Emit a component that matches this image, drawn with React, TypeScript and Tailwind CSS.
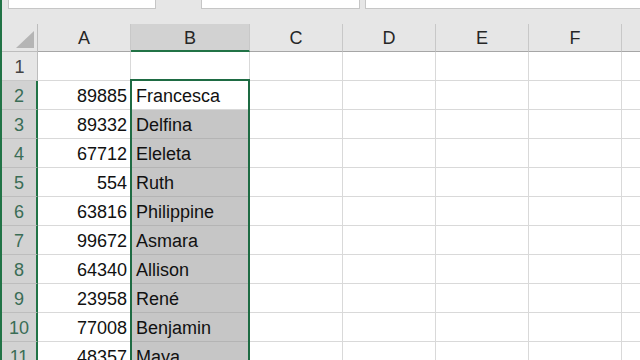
import React from "react";

const cols = [
  { l: "A", w: "w-[93px]" },
  { l: "B", w: "w-[119px]" },
  { l: "C", w: "w-[93px]" },
  { l: "D", w: "w-[93px]" },
  { l: "E", w: "w-[93px]" },
  { l: "F", w: "w-[93px]" },
  { l: "", w: "w-[40px]" },
];

const data: [string, string][] = [
  ["", ""],
  ["89885", "Francesca"],
  ["89332", "Delfina"],
  ["67712", "Eleleta"],
  ["554", "Ruth"],
  ["63816", "Philippine"],
  ["99672", "Asmara"],
  ["64340", "Allison"],
  ["23958", "René"],
  ["77008", "Benjamin"],
  ["48357", "Maya"],
];

export default function App() {
  return (
    <div
      className="relative w-[640px] h-[360px] overflow-hidden bg-white flex"
      style={{ fontFamily: '"Liberation Sans", Arial, sans-serif' }}
    >
      <div className="w-[2px] shrink-0 bg-[#217346]" />
      <div className="flex-1 flex flex-col">
        {/* formula bar remnant */}
        <div className="h-[24px] shrink-0 bg-[#e6e6e6] flex items-start">
          <div className="ml-[6px] w-[148px] h-[9px] bg-white border-x border-b border-[#c6c6c6]" />
          <div className="ml-[45px] w-[159px] h-[9px] bg-white border-x border-b border-[#c6c6c6]" />
          <div className="ml-[5px] flex-1 h-[9px] bg-white border-l border-b border-[#c6c6c6]" />
        </div>
        {/* column headers */}
        <div className="h-[28px] shrink-0 flex bg-[#e6e6e6] text-[18px] text-[#262626]">
          <div className="w-[36px] shrink-0 border-r border-b border-[#bdbdbd] flex items-end justify-end pr-[3px] pb-[3px]">
            <svg width="18" height="17" viewBox="0 0 18 17">
              <polygon points="18,0 18,17 0,17" fill="#b5b5b5" />
            </svg>
          </div>
          {cols.map((c) => (
            <div
              key={c.l + c.w}
              className={`${c.w} shrink-0 flex items-center justify-center pt-[2px] border-r border-[#c8c8c8] ${
                c.l === "B"
                  ? "bg-[#d2d2d2] border-b-2 border-b-[#217346]"
                  : "border-b border-b-[#a6a6a6]"
              }`}
            >
              {c.l}
            </div>
          ))}
        </div>
        {/* rows */}
        {data.map(([a, b], i) => {
          const sel = i > 0;
          return (
            <div key={i} className="h-[29px] shrink-0 flex text-[18px] text-[#111111]">
              <div
                className={`w-[36px] shrink-0 flex items-center justify-center pt-[3px] border-b ${
                  sel
                    ? "bg-[#d2d2d2] text-[#3a6d56] border-r-2 border-r-[#217346] border-b-[#bdbdbd]"
                    : "bg-[#e6e6e6] text-[#444444] border-r border-r-[#bdbdbd] border-b-[#c8c8c8]"
                }`}
              >
                {i + 1}
              </div>
              <div className="w-[93px] shrink-0 border-r border-b border-[#d9d9d9] flex items-center justify-end pr-[3px] pt-[3px]">
                {a}
              </div>
              <div
                className={`w-[119px] shrink-0 border-r border-b flex items-center pl-[5px] pt-[3px] ${
                  i >= 2 ? "bg-[#c6c6c6] border-[#b4b4b4]" : "border-[#d9d9d9]"
                }`}
              >
                {b}
              </div>
              {[0, 1, 2, 3].map((k) => (
                <div key={k} className="w-[93px] shrink-0 border-r border-b border-[#d9d9d9]" />
              ))}
              <div className="w-[40px] shrink-0 border-b border-[#d9d9d9]" />
            </div>
          );
        })}
      </div>
      {/* selection border */}
      <div className="absolute left-[130px] top-[79px] w-[120px] h-[300px] border-2 border-[#1e6b43] pointer-events-none" />
    </div>
  );
}
